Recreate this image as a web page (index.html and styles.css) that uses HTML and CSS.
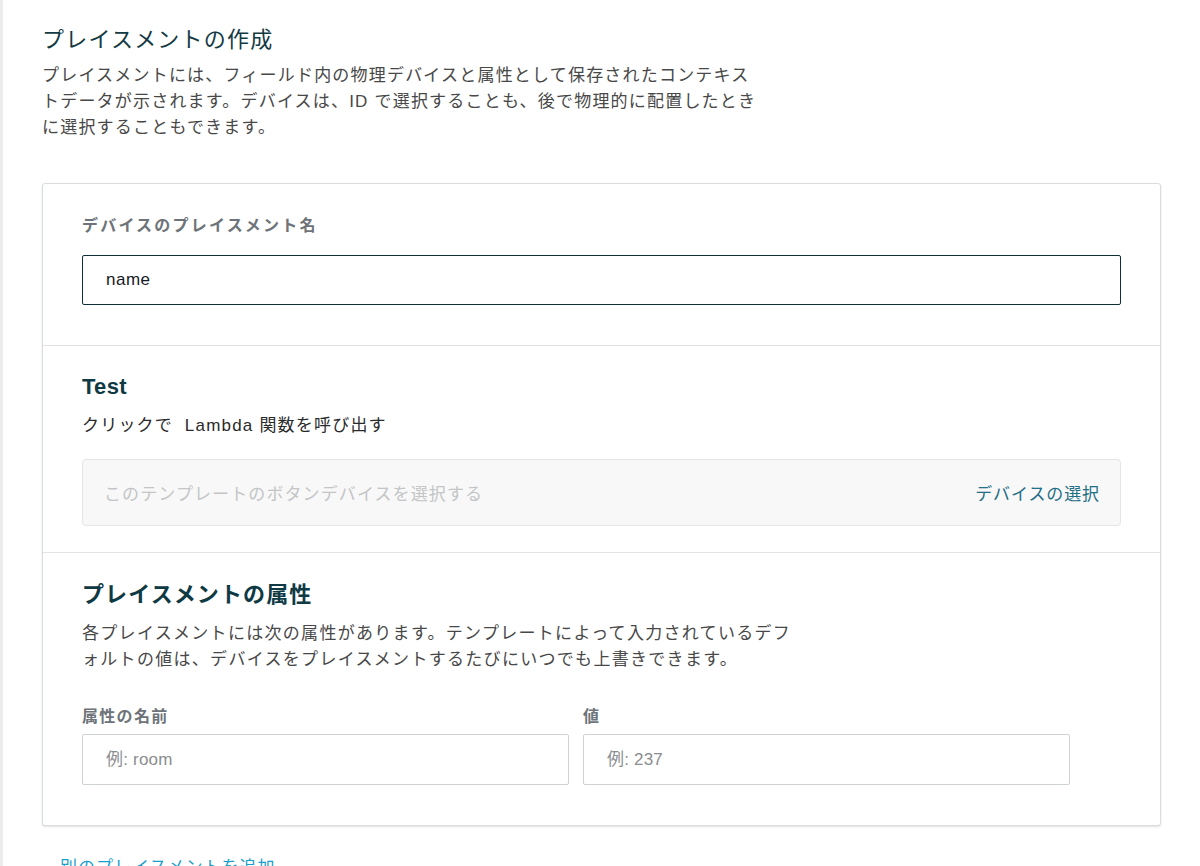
FILE: index.html
```html
<!DOCTYPE html>
<html lang="ja">
<head>
<meta charset="utf-8">
<title>プレイスメントの作成</title>
<link rel="stylesheet" href="styles.css">
</head>
<body>
<div class="page">
  <h1 class="title">プレイスメントの作成</h1>
  <p class="intro">プレイスメントには、フィールド内の物理デバイスと属性として保存されたコンテキス<br>トデータが示されます。デバイスは、ID で選択することも、後で物理的に配置したとき<br>に選択することもできます。</p>

  <div class="card">
    <section class="section sec-name">
      <label class="field-label name-label">デバイスのプレイスメント名</label>
      <input class="text-input focused" type="text" value="name">
    </section>

    <section class="section sec-test">
      <h2 class="sec-title test-title">Test</h2>
      <p class="sec-desc">クリックで&nbsp; Lambda 関数を呼び出す</p>
      <div class="device-box">
        <span class="device-placeholder">このテンプレートのボタンデバイスを選択する</span>
        <a class="device-link" href="#">デバイスの選択</a>
      </div>
    </section>

    <section class="section sec-attr">
      <h2 class="sec-title attr-title">プレイスメントの属性</h2>
      <p class="sec-para">各プレイスメントには次の属性があります。テンプレートによって入力されているデフ<br>ォルトの値は、デバイスをプレイスメントするたびにいつでも上書きできます。</p>
      <div class="attr-grid">
        <div class="attr-col">
          <label class="field-label">属性の名前</label>
          <input class="text-input plain" type="text" placeholder="例: room">
        </div>
        <div class="attr-col">
          <label class="field-label">値</label>
          <input class="text-input plain" type="text" placeholder="例: 237">
        </div>
      </div>
    </section>
  </div>

  <a class="add-link" href="#">別のプレイスメントを追加</a>
</div>
</body>
</html>
```

FILE: styles.css
```css
html, body {
  margin: 0;
  padding: 0;
  background: #ffffff;
}

body {
  font-family: "Liberation Sans", "Noto Sans CJK JP", sans-serif;
  color: #16191f;
  overflow: hidden;
}

.page {
  border-left: 3px solid #ececec;
  padding: 24px 39px 0 39px;
  min-height: 866px;
  box-sizing: border-box;
}

.title {
  margin: 0;
  font-size: 22px;
  line-height: 32px;
  font-weight: 400;
  color: #143a44;
  letter-spacing: 1.2px;
}

.intro {
  margin: 7px 0 0 0;
  font-size: 17px;
  line-height: 26px;
  color: #484848;
  letter-spacing: 1.2px;
}

.card {
  margin-top: 42px;
  border: 1px solid #d9dcdc;
  border-radius: 3px;
  box-shadow: 0 1px 2px rgba(0, 0, 0, 0.12);
  background: #fff;
}

.section {
  padding: 0 39px;
  border-top: 1px solid #e2e4e4;
}

.section:first-child {
  border-top: none;
}

.sec-name {
  padding-top: 32px;
  padding-bottom: 40px;
}

.field-label {
  display: block;
  font-size: 16px;
  line-height: 20px;
  font-weight: 700;
  color: #6d7378;
  letter-spacing: 1.3px;
}

.name-label {
  letter-spacing: 2.2px;
}

.text-input {
  display: block;
  width: 100%;
  box-sizing: border-box;
  height: 50px;
  padding: 0 23px;
  font-family: "Liberation Sans", "Noto Sans CJK JP", sans-serif;
  font-size: 17px;
  color: #16191f;
  background: #fff;
  border-radius: 2px;
  outline: none;
}

.text-input.focused {
  margin-top: 19px;
  border: 1px solid #0e2e38;
  letter-spacing: 0.5px;
}

.text-input.plain {
  margin-top: 7px;
  border: 1px solid #cfd2d3;
  height: 51px;
}

.text-input::placeholder {
  color: #8a8d8f;
  letter-spacing: 0.2px;
}

.sec-test {
  padding-top: 27px;
  padding-bottom: 26px;
}

.sec-title {
  margin: 0;
  font-size: 20px;
  line-height: 28px;
  font-weight: 700;
  color: #0f3a44;
}

.test-title {
  font-size: 22px;
  letter-spacing: 0.3px;
}

.sec-desc {
  margin: 13px 0 0 0;
  font-size: 17px;
  line-height: 24px;
  color: #2a2a2a;
  letter-spacing: 1.2px;
}

.device-box {
  margin-top: 21px;
  height: 67px;
  box-sizing: border-box;
  background: #f8f8f8;
  border: 1px solid #e4e5e5;
  border-radius: 4px;
  display: flex;
  align-items: center;
  justify-content: space-between;
  padding: 0 20px 0 21px;
}

.device-placeholder {
  font-size: 17px;
  color: #c3c5c6;
  letter-spacing: 1.1px;
}

.device-link {
  font-size: 17px;
  color: #1f6f86;
  text-decoration: none;
  letter-spacing: 0.9px;
}

.sec-attr {
  padding-top: 27px;
  padding-bottom: 40px;
}

.attr-title {
  font-size: 22px;
  line-height: 30px;
  letter-spacing: 1.1px;
}

.sec-para {
  margin: 11px 0 0 0;
  font-size: 17px;
  line-height: 26px;
  color: #484848;
  letter-spacing: 1.3px;
}

.attr-grid {
  margin-top: 34px;
  display: grid;
  grid-template-columns: 487px 487px;
  column-gap: 14px;
}

.add-link {
  display: block;
  margin-top: 29px;
  margin-left: 18px;
  font-size: 17px;
  line-height: 26px;
  color: #1aa0cc;
  text-decoration: none;
  letter-spacing: 1px;
}
```
